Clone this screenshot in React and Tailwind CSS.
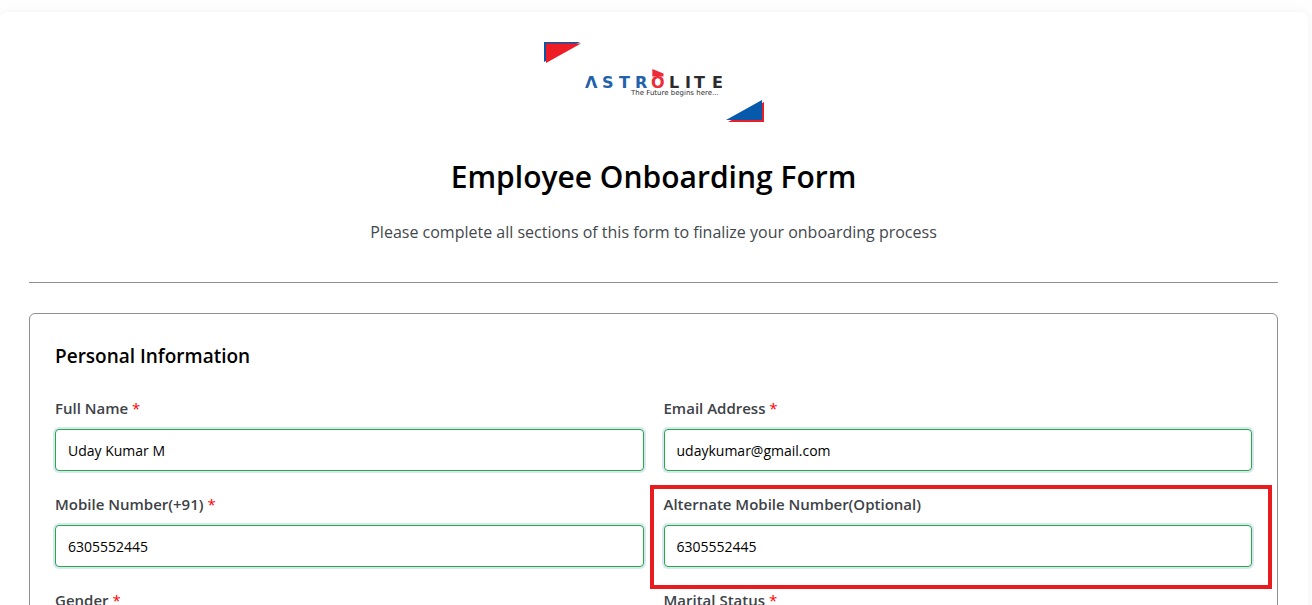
import React from "react";

function Logo() {
  return (
    <svg
      viewBox="0 0 220 80"
      role="img"
      aria-label="Astrolite"
      className="mx-auto block h-20 w-[220px]"
    >
      <path d="M0 0H36L0 20Z" fill="#0a56a8" />
      <path d="M2 1.500H37L2 21Z" fill="#ee1c25" />
      <path d="M220 60V80H184Z" fill="#ee1c25" />
      <path d="M218 58V78H182Z" fill="#0759ab" />

      <g fontFamily="'DejaVu Sans', sans-serif" fontWeight="700" fontSize="16">
        <text y="46" x="41 58 75 91" fill="#2362ab">
          ASTR
        </text>
        <text y="46" x="107" fill="#ee2c37">
          O
        </text>
        <text y="46" x="125 141 150 168" fill="#2b2b2d">
          LITE
        </text>
      </g>
      <path d="M47.200 38L50.400 46.500H44Z" fill="#ffffff" />
      <path d="M108.300 27L119.500 31.500V34.500H108.300Z" fill="#ee2c37" />
      <text
        x="87"
        y="53"
        fill="#333333"
        fontFamily="'DejaVu Sans', sans-serif"
        fontSize="7"
      >
        The Future begins here...
      </text>
    </svg>
  );
}

function FieldLabel({ htmlFor, required, children }) {
  return (
    <label
      htmlFor={htmlFor}
      className="mb-[9px] block text-[15px] leading-6 font-semibold text-[#3d4247]"
    >
      {children}
      {required && <span className="font-normal text-[#ff0000]"> *</span>}
    </label>
  );
}

function Field({ id, label, value, type = "text", required, highlighted }) {
  return (
    <div className="relative">
      <FieldLabel htmlFor={id} required={required}>
        {label}
      </FieldLabel>
      <input
        id={id}
        type={type}
        defaultValue={value}
        required={required}
        className="block h-[42px] w-full rounded-sm border border-[#28a745] bg-white px-3 text-[14px] text-black shadow-[0_0_0_2px_#d8e8f3] outline-none"
      />
      {highlighted && (
        <div className="pointer-events-none absolute -top-[7px] -right-5 -bottom-[22px] -left-[14px] border-4 border-[#e81c1e]" />
      )}
    </div>
  );
}

function SelectField({ id, label, options }) {
  return (
    <div>
      <FieldLabel htmlFor={id} required>
        {label}
      </FieldLabel>
      <select
        id={id}
        className="block h-[42px] w-full rounded-sm border border-[#28a745] bg-white px-3 text-[14px] text-black"
      >
        {options.map((option) => (
          <option key={option}>{option}</option>
        ))}
      </select>
    </div>
  );
}

export default function App() {
  return (
    <div className="h-screen overflow-hidden bg-[#fefefe] pt-3 pr-1 font-['Open_Sans','Noto_Sans',sans-serif]">
      <main className="min-h-full rounded-lg bg-white pt-[30px] pr-[30px] pb-[30px] pl-[29px] shadow-[0_0_10px_rgba(0,0,0,0.05)]">
        <header className="mb-[30px] border-b border-[#8f8f8f] pb-9 text-center">
          <Logo />
          <h1 className="mt-[30px] text-[30px] leading-[50px] font-semibold text-black">
            Employee Onboarding Form
          </h1>
          <p className="mt-4 text-[16px] leading-7 text-[#43484d]">
            Please complete all sections of this form to finalize your
            onboarding process
          </p>
        </header>

        <form className="rounded-md border border-[#8f8f8f] p-[25px]">
          <h2 className="mb-[23px] text-[19px] leading-[34px] font-semibold text-black">
            Personal Information
          </h2>
          <div className="grid grid-cols-2 gap-x-5 gap-y-[21px]">
            <Field id="name" label="Full Name" value="Uday Kumar M" required />
            <Field
              id="email"
              label="Email Address"
              type="email"
              value="udaykumar@gmail.com"
              required
            />
            <Field
              id="mobile"
              label="Mobile Number(+91)"
              type="tel"
              value="6305552445"
              required
            />
            <Field
              id="alternate"
              label="Alternate Mobile Number(Optional)"
              type="tel"
              value="6305552445"
              highlighted
            />
            <SelectField id="gender" label="Gender" options={["Male", "Female"]} />
            <SelectField
              id="marital"
              label="Marital Status"
              options={["Single", "Married"]}
            />
          </div>
        </form>
      </main>
    </div>
  );
}
